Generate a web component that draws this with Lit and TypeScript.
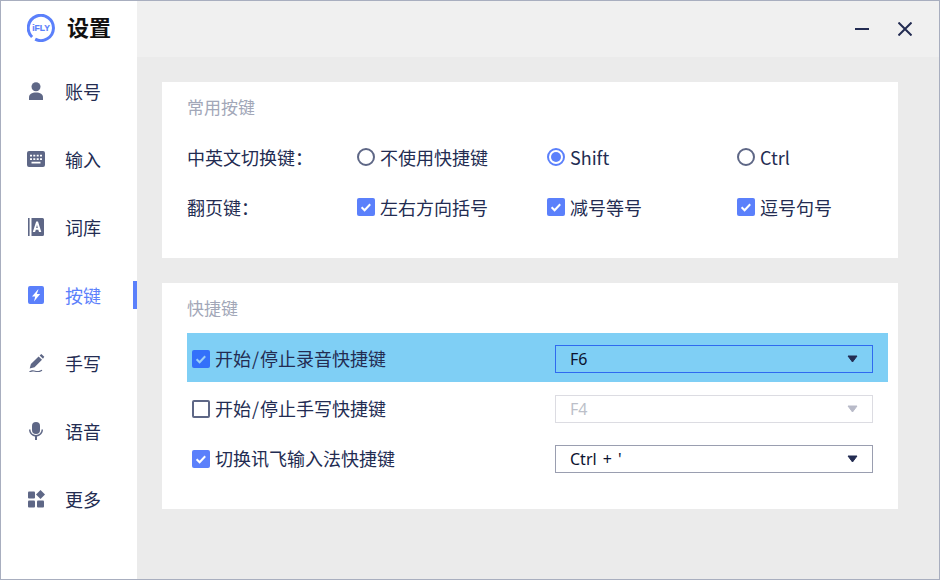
import { LitElement, html, css, svg } from "lit";
import { customElement } from "lit/decorators.js";

const ICONS: Record<string, unknown> = {
  user: svg`<circle cx="9" cy="4.800" r="4.500"/><path d="M2 18v-2.500C2 12.200 4.800 10.600 9 10.600s7 1.600 7 4.900V18z"/>`,
  keyboard: svg`<path fill-rule="evenodd" d="M2 1H16A2 2 0 0 1 18 3V15a2 2 0 0 1-2 2H2A2 2 0 0 1 0 15V3A2 2 0 0 1 2 1zM3 4.800v1.700h2V4.800zM6.300 4.800v1.700h2V4.800zM9.700 4.800v1.700h2V4.800zM13 4.800v1.700h2V4.800zM3 8.300v1.700h2V8.300zM6.300 8.300v1.700h2V8.300zM9.700 8.300v1.700h2V8.300zM13 8.300v1.700h2V8.300zM4.500 11.800v1.700h9v-1.700z"/>`,
  book: svg`<rect x="1" y="0" width="1.600" height="18"/><path fill-rule="evenodd" d="M4.500 0H15.500A1.500 1.500 0 0 1 17 1.500v15A1.500 1.500 0 0 1 15.500 18H4.500zM11 3.500H9.200L5.800 14h2.300l.7-2.300h2.500l.7 2.300h2.300zM10 6.800l.8 3.100H9.200z"/>`,
  bolt: svg`<path fill-rule="evenodd" d="M3 0H15A2 2 0 0 1 17 2V16A2 2 0 0 1 15 18H3A2 2 0 0 1 1 16V2A2 2 0 0 1 3 0zM11 3.500L5 10.400h3.200L7 15.500 13.200 8H9.800L11.500 3.500z"/>`,
  pen: svg`<path d="M14.300 0l3 2.800-1.300 2-3.400-3.200zM11.600 2.600L15 5.800 7.500 13.300l-4.800 1.300 1.200-4.700z"/><path d="M2 17.800c2.300-1.900 4.300-1.900 6.300-1.100 2 .7 3.800.6 6.500-.9l.5 1c-2.900 1.700-5.100 1.800-7.300 1-1.800-.7-3.500-.6-5.300.8z"/>`,
  mic: svg`<rect x="5" y="0" width="8" height="12" rx="4"/><path d="M2 7.500h1.500c0 3.200 2.300 5.400 5.500 5.400s5.500-2.200 5.500-5.400H16c0 3.800-2.800 6.600-6 7V18H8v-3.500c-3.200-.4-6-3.200-6-7z"/>`,
  more: svg`<rect x="1" y="1.500" width="7" height="7" rx="1"/><rect x="1" y="10.500" width="7" height="7" rx="1"/><rect x="10" y="10.500" width="7" height="7" rx="1"/><path d="M13.500 0l4.500 4.500-4.500 4.500L9 4.500z"/>`,
};

const NAV = [
  { id: "user", label: "账号" },
  { id: "keyboard", label: "输入" },
  { id: "book", label: "词库" },
  { id: "bolt", label: "按键", active: true },
  { id: "pen", label: "手写" },
  { id: "mic", label: "语音" },
  { id: "more", label: "更多" },
];

const check = svg`<svg class="tick" viewBox="0 0 18 18"><path d="M4.600 9.200l3 3 5.600-6" fill="none" stroke="#fff" stroke-width="2"/></svg>`;

@customElement("app-root")
export class AppRoot extends LitElement {
  static styles = css`
    :host {
      display: block;
      width: 940px;
      height: 580px;
      box-sizing: border-box;
      border: 1px solid #a8aebf;
      font-family: "Noto Sans CJK SC", "Noto Sans", sans-serif;
      font-size: 18px;
      color: #232c52;
      background: #ebebeb;
      overflow: hidden;
    }
    .win { display: flex; height: 100%; }
    .side { width: 136px; flex: none; background: #fff; display: flex; flex-direction: column; }
    .brand { height: 56px; flex: none; display: flex; align-items: center; padding: 0 0 3px 26px; box-sizing: border-box; gap: 12px; }
    .brand svg { width: 28px; height: 28px; flex: none; }
    .brand b { font-size: 22px; font-weight: 700; color: #111; line-height: 28px; padding-bottom: 4px; }
    .logo-text { font-family: "Liberation Sans", sans-serif; font-weight: 700; font-size: 8.500px; fill: #5b80fb; stroke: #5b80fb; stroke-width: 0.200; }
    .nav { height: 68px; display: flex; align-items: center; position: relative; padding-left: 26px; box-sizing: border-box; gap: 20px; }
    .nav svg { width: 18px; height: 18px; fill: #5e6786; flex: none; }
    .nav span { line-height: 24px; }
    .nav.on { color: #5b80fb; }
    .nav.on svg { fill: #5b80fb; }
    .nav.on::after { content: ""; position: absolute; right: 0; top: 20px; width: 4px; height: 28px; background: #5b80fb; }

    .main { flex: 1; display: flex; flex-direction: column; min-width: 0; }
    .top { height: 56px; flex: none; background: #f0f0f0; display: flex; justify-content: flex-end; align-items: center; gap: 29px; padding-right: 27px; box-sizing: border-box; }
    .top svg { width: 14px; height: 14px; stroke: #232c52; stroke-width: 2; fill: none; display: block; }
    .body { padding: 25px 41px 0 25px; display: flex; flex-direction: column; gap: 25px; }
    .card { background: #fff; padding: 0 10px 0 25px; }
    .card.one { height: 176px; }
    .card.two { height: 226px; }
    .title { height: 50px; padding-bottom: 1px; box-sizing: border-box; display: flex; align-items: center; font-size: 17px; color: #a2a7b8; }
    .grid { display: grid; grid-template-columns: 170px 190px 190px 1fr; grid-auto-rows: 50px; align-items: center; }
    .opt { display: flex; align-items: center; gap: 5px; }
    .radio { width: 18px; height: 18px; box-sizing: border-box; border: 2px solid #5e6786; border-radius: 50%; flex: none; background: #fff; }
    .radio.on { border-color: #5b80fb; display: flex; align-items: center; justify-content: center; }
    .radio.on::after { content: ""; width: 10px; height: 10px; border-radius: 50%; background: #5b80fb; }
    .box { width: 18px; height: 18px; box-sizing: border-box; border-radius: 2px; flex: none; background: #5b80fb; }
    .box.off { background: #fff; border: 2px solid #5e6786; }
    .box.deep { background: #3370fa; }
    .tick { width: 18px; height: 18px; display: block; }
    .box.deep .tick path { stroke: #9cd0f6; }
    .row { height: 49px; margin-bottom: 1px; padding: 3px 15px 0 5px; box-sizing: border-box; display: flex; align-items: center; }
    .row.hl { background: #7fcff5; }
    .row .opt > span:last-child { padding-bottom: 2px; }
    .slash { margin: 0 1px; }
    .select { margin-left: auto; width: 318px; height: 28px; box-sizing: border-box; border: 1px solid #9a9eb0; background: #fff; padding: 0 14px; display: flex; align-items: center; justify-content: space-between; font-family: "Noto Sans", sans-serif; font-size: 16px; word-spacing: 2px; color: #0c1230; }
    .select svg { width: 11px; height: 8px; flex: none; fill: #232c52; stroke: #232c52; stroke-width: 1; stroke-linejoin: round; display: block; }
    .hl .select { background: transparent; border-color: #2f6af0; }
    .select.dis { border-color: #dcdce2; color: #bcbfc9; }
    .select.dis svg { fill: #b8bac8; stroke: #b8bac8; }
  `;

  private box(kind = "") {
    return html`<span class="box ${kind}">${kind === "off" ? "" : check}</span>`;
  }

  private select(value: string, dis = false) {
    return html`<div class="select ${dis ? "dis" : ""}">
      <span>${value}</span>
      <svg viewBox="0 0 11 8"><path d="M1 1h9L5.500 7z"/></svg>
    </div>`;
  }

  render() {
    return html`<div class="win">
      <aside class="side">
        <div class="brand">
          <svg viewBox="0 0 28 28">
            <path d="M5.100 23A12.600 12.600 0 1 1 8.200 25.200" fill="none" stroke="#5b80fb" stroke-width="3"/>
            <text class="logo-text" x="14" y="17" text-anchor="middle">iFLY</text>
          </svg>
          <b>设置</b>
        </div>
        ${NAV.map(
          (n) => html`<div class="nav ${n.active ? "on" : ""}">
            <svg viewBox="0 0 18 18">${ICONS[n.id]}</svg>
            <span>${n.label}</span>
          </div>`
        )}
      </aside>
      <div class="main">
        <div class="top">
          <svg viewBox="0 0 14 14"><path d="M0 7h14"/></svg>
          <svg viewBox="0 0 14 14"><path d="M.5.500l13 13M13.500.500l-13 13"/></svg>
        </div>
        <div class="body">
          <section class="card one">
            <div class="title">常用按键</div>
            <div class="grid">
              <span>中英文切换键：</span>
              <label class="opt"><span class="radio"></span>不使用快捷键</label>
              <label class="opt"><span class="radio on"></span>Shift</label>
              <label class="opt"><span class="radio"></span>Ctrl</label>
              <span>翻页键：</span>
              <label class="opt">${this.box()}左右方向括号</label>
              <label class="opt">${this.box()}减号等号</label>
              <label class="opt">${this.box()}逗号句号</label>
            </div>
          </section>
          <section class="card two">
            <div class="title">快捷键</div>
            <div class="row hl"><label class="opt">${this.box("deep")}<span>开始<span class="slash">/</span>停止录音快捷键</span></label>${this.select("F6")}</div>
            <div class="row"><label class="opt">${this.box("off")}<span>开始<span class="slash">/</span>停止手写快捷键</span></label>${this.select("F4", true)}</div>
            <div class="row"><label class="opt">${this.box()}<span>切换讯飞输入法快捷键</span></label>${this.select("Ctrl + '")}</div>
          </section>
        </div>
      </div>
    </div>`;
  }
}
